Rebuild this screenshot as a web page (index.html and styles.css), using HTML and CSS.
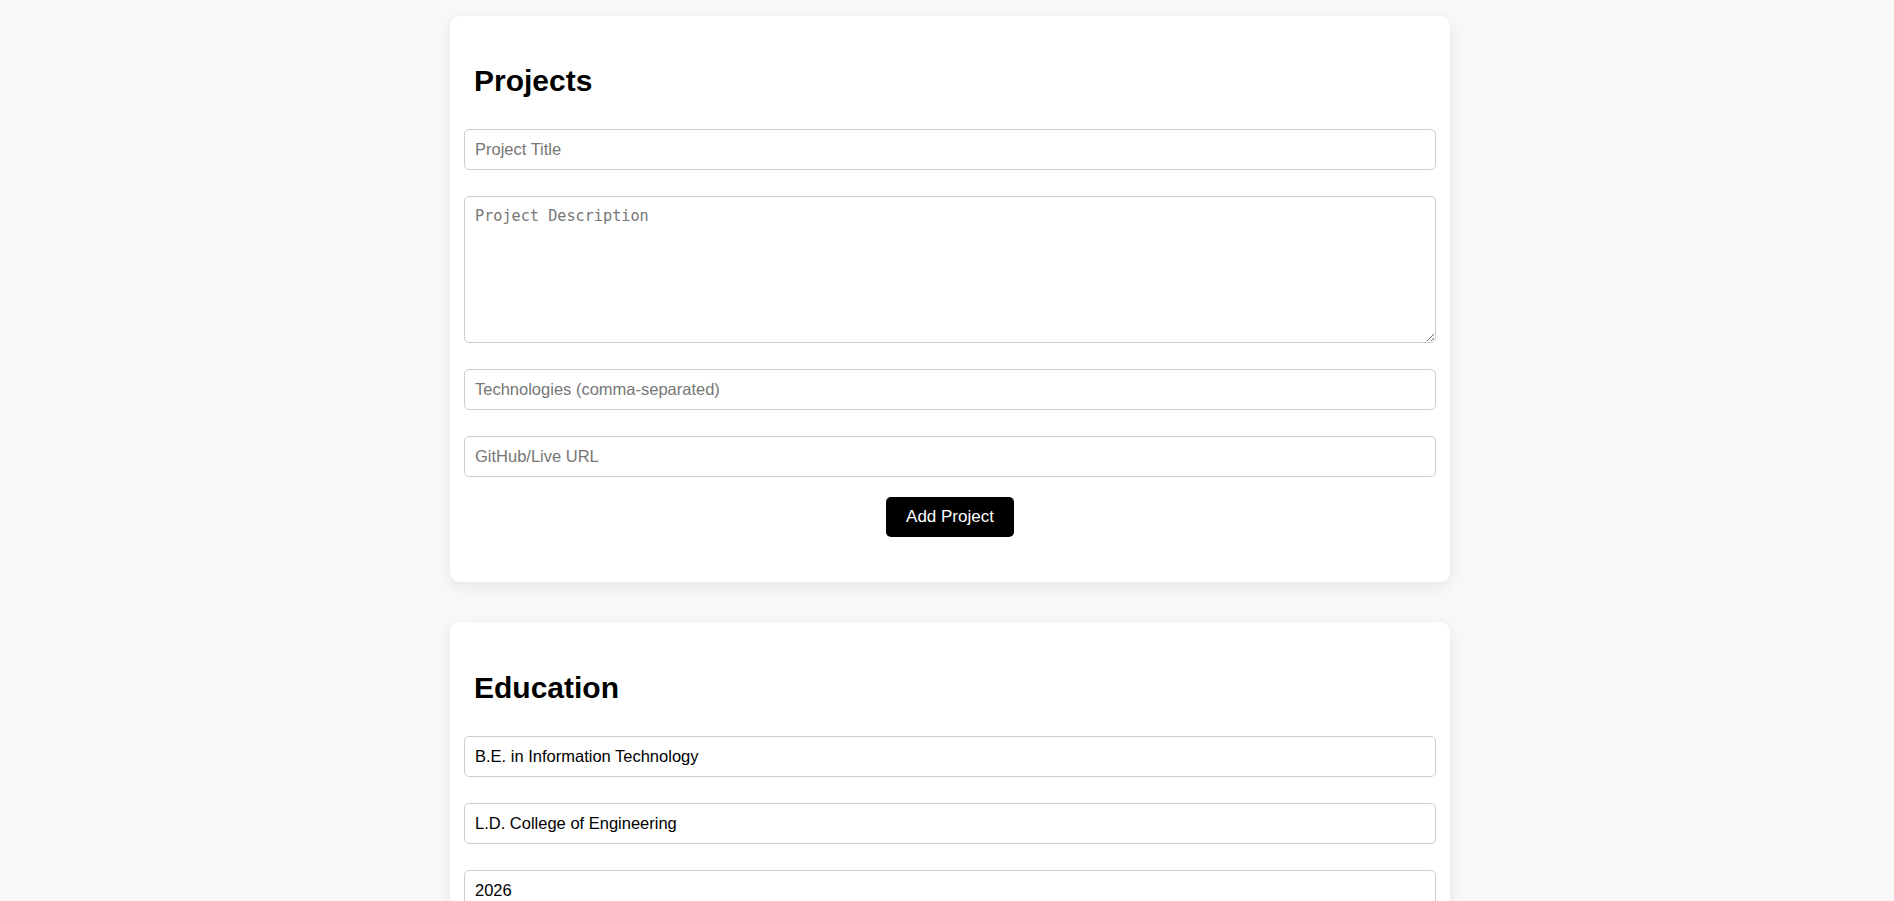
FILE: index.html
```html
<!DOCTYPE html>
<html lang="en">
<head>
<meta charset="UTF-8">
<meta name="viewport" content="width=device-width, initial-scale=1.0">
<title>Resume Builder</title>
<link rel="stylesheet" href="styles.css">
</head>
<body>
<div class="page">
  <section class="card">
    <h2>Projects</h2>
    <div class="fields">
      <input type="text" placeholder="Project Title">
      <textarea placeholder="Project Description"></textarea>
      <input type="text" placeholder="Technologies (comma-separated)">
      <input type="text" placeholder="GitHub/Live URL">
    </div>
    <div class="actions">
      <button>Add Project</button>
    </div>
  </section>

  <section class="card">
    <h2>Education</h2>
    <div class="fields">
      <input type="text" value="B.E. in Information Technology">
      <input type="text" value="L.D. College of Engineering">
      <input type="text" value="2026">
    </div>
  </section>
</div>
</body>
</html>
```

FILE: styles.css
```css
body {
  font-family: "Liberation Sans", Arial, sans-serif;
  background-color: #f8f8f8;
  color: #000;
  margin: 0;
}
.page {
  max-width: 1000px;
  margin: 0 auto;
  padding: 16px 0 40px 6px;
}
.card {
  background-color: #fff;
  border-radius: 10px;
  box-shadow: 0 4px 14px rgba(0, 0, 0, 0.08);
  padding: 24px 14px 45px;
  margin-bottom: 40px;
}
h2 {
  font-size: 30px;
  margin: 24px 10px 31px;
}
.card + .card h2 {
  margin-top: 25px;
}
.fields {
  display: grid;
  row-gap: 26px;
}
input,
textarea {
  display: block;
  width: 100%;
  box-sizing: border-box;
  padding: 10px;
  border: 1px solid #ccc;
  border-radius: 5px;
  background-color: #fff;
  color: #000;
  margin: 0;
}
input {
  font-family: "Liberation Sans", Arial, sans-serif;
  font-size: 16.5px;
  line-height: 19px;
}
textarea {
  font-family: "DejaVu Sans Mono", monospace;
  font-size: 15.2px;
  height: 147px;
}
input::placeholder,
textarea::placeholder {
  color: #767676;
}
.actions {
  margin-top: 20px;
  text-align: center;
}
button {
  background-color: #000;
  color: #fff;
  border: none;
  border-radius: 5px;
  padding: 10px 20px;
  font-family: "Liberation Sans", Arial, sans-serif;
  font-size: 17px;
  line-height: 20px;
  cursor: pointer;
}
```
